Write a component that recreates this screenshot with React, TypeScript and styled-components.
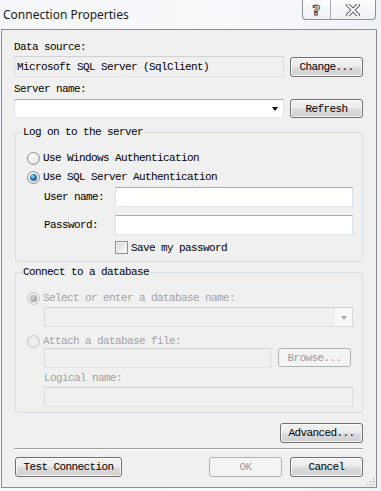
import React from "react";
import styled, { createGlobalStyle } from "styled-components";

const Global = createGlobalStyle`
  html, body { margin: 0; padding: 0; }
  body { width: 381px; height: 491px; overflow: hidden; background: #f3f6f9; }
`;

const mono = `"Liberation Mono", "DejaVu Sans Mono", monospace`;

const Window = styled.div`
  width: 381px;
  height: 491px;
  box-sizing: border-box;
  display: flex;
  flex-direction: column;
  background: linear-gradient(90deg, #f4f6f9 0%, #f8f9fb 60%, #eef2f7 100%);
  font-family: ${mono};
  font-size: 11px;
  letter-spacing: -0.6px;
  color: #000;
`;

const TitleBar = styled.div`
  height: 29px;
  flex: none;
  display: flex;
  justify-content: space-between;
  align-items: flex-start;
`;

const Title = styled.div`
  font-family: "Noto Sans", "Open Sans", sans-serif;
  font-size: 12px;
  letter-spacing: 0;
  color: #1b1b1b;
  padding: 7px 0 0 3px;
  line-height: 16px;
`;

const Caption = styled.div`
  margin-right: 5px;
  display: flex;
  height: 20px;
  width: 74px;
  box-sizing: border-box;
  border: 1px solid #8d9299;
  border-top: none;
  border-radius: 0 0 4px 4px;
  background: linear-gradient(#fbfcfd, #eef1f4);
`;

const CapButton = styled.div<{ $w: number; $divider?: boolean }>`
  width: ${(p) => p.$w}px;
  display: flex;
  align-items: center;
  justify-content: center;
  border-right: ${(p) => (p.$divider ? "1px solid #a9adb3" : "none")};
`;

const HelpGlyph = styled.span`
  font-family: "DejaVu Sans", sans-serif;
  font-weight: bold;
  font-size: 14px;
  letter-spacing: 0;
  color: #fff;
  -webkit-text-stroke: 1px #444;
  line-height: 14px;
`;

const Client = styled.div`
  margin: 0 4px 3px 1px;
  flex: 1;
  border: 1px solid #898c90;
  background: #f0f0f0;
  padding: 11px 13px 0 12px;
  display: flex;
  flex-direction: column;
  position: relative;
`;

const Label = styled.div<{ $top?: number; $left?: number; $disabled?: boolean }>`
  height: 12px;
  line-height: 12px;
  white-space: nowrap;
  margin-top: ${(p) => p.$top ?? 0}px;
  margin-left: ${(p) => p.$left ?? 0}px;
  color: ${(p) => (p.$disabled ? "#a2a2a2" : "#000")};
`;

const Row = styled.div<{ $top?: number; $left?: number; $gap?: number }>`
  display: flex;
  align-items: flex-start;
  margin-top: ${(p) => p.$top ?? 0}px;
  margin-left: ${(p) => p.$left ?? 0}px;
  gap: ${(p) => p.$gap ?? 0}px;
`;

const TextBox = styled.input<{ $w: number; $h?: number; $muted?: boolean }>`
  box-sizing: border-box;
  width: ${(p) => p.$w}px;
  height: ${(p) => p.$h ?? 20}px;
  margin: 0;
  padding: 0 0 0 2px;
  font: inherit;
  letter-spacing: inherit;
  color: #000;
  outline: none;
  border: 1px solid;
  border-color: ${(p) =>
    p.$muted ? "#d2d2d2 #dcdcdc #e2e2e2 #dcdcdc" : "#abadb3 #dbdfe6 #e3e9ef #e2e3ea"};
  background: ${(p) => (p.$muted ? "#f0f0f0" : "#fff")};
  &:disabled {
    background: #f0f0f0;
  }
`;

const Combo = styled.div<{ $w: number; $h?: number; $disabled?: boolean }>`
  box-sizing: border-box;
  width: ${(p) => p.$w}px;
  height: ${(p) => p.$h ?? 20}px;
  display: flex;
  justify-content: flex-end;
  align-items: stretch;
  border: 1px solid;
  border-color: ${(p) =>
    p.$disabled ? "#cfcfcf #d9d9d9 #dedede #d9d9d9" : "#abadb3 #dbdfe6 #e3e9ef #e2e3ea"};
  background: ${(p) => (p.$disabled ? "#f0f0f0" : "#fff")};
`;

const DropBtn = styled.div<{ $disabled?: boolean }>`
  width: 17px;
  display: flex;
  align-items: center;
  justify-content: center;
  background: ${(p) => (p.$disabled ? "#f7f7f7" : "transparent")};
  &::after {
    content: "";
    border-left: 3.5px solid transparent;
    border-right: 3.5px solid transparent;
    border-top: 4px solid ${(p) => (p.$disabled ? "#a6a6a6" : "#111")};
    margin-top: 1px;
  }
`;

const Button = styled.button<{ $w: number; $h?: number }>`
  box-sizing: border-box;
  width: ${(p) => p.$w}px;
  height: ${(p) => p.$h ?? 20}px;
  margin: 0;
  padding: 0;
  font: inherit;
  letter-spacing: inherit;
  line-height: 12px;
  color: #000;
  border: 1px solid #707070;
  border-radius: 3px;
  background: linear-gradient(#f2f2f2 0%, #ebebeb 49%, #dddddd 50%, #cfcfcf 100%);
  box-shadow: inset 0 0 0 1px rgba(255, 255, 255, 0.75);
  &:disabled {
    color: #9a9a9a;
    border-color: #adb2b5;
    background: #f4f4f4;
    box-shadow: none;
  }
`;

const Group = styled.fieldset<{ $top: number; $bottom: number }>`
  margin: ${(p) => p.$top}px 0 0 1px;
  padding: 0 6px ${(p) => p.$bottom}px 6px;
  border: 1px solid #d5dfe5;
  border-radius: 3px;
  min-width: 0;
  display: flex;
  flex-direction: column;
  align-items: flex-start;
`;

const Legend = styled.legend`
  padding: 0 1px;
  height: 12px;
  line-height: 12px;
`;

const RadioRow = styled.label<{ $top: number; $disabled?: boolean }>`
  display: flex;
  align-items: center;
  height: 14px;
  margin-top: ${(p) => p.$top}px;
  margin-left: 5px;
  gap: 3px;
  color: ${(p) => (p.$disabled ? "#a2a2a2" : "#000")};
  white-space: nowrap;
`;

const Radio = styled.span<{ $checked?: boolean; $disabled?: boolean }>`
  box-sizing: border-box;
  width: 13px;
  height: 13px;
  border-radius: 50%;
  border: 1px solid ${(p) => (p.$disabled ? "#c4c4c4" : "#8e8f8f")};
  background: ${(p) =>
    p.$disabled
      ? "radial-gradient(circle at 50% 50%, #f4f4f4, #e6e6e6)"
      : "radial-gradient(circle at 40% 35%, #ffffff 0%, #ececec 55%, #d2d2d2 100%)"};
  display: flex;
  align-items: center;
  justify-content: center;
  &::after {
    content: "";
    display: ${(p) => (p.$checked ? "block" : "none")};
    width: 7px;
    height: 7px;
    border-radius: 50%;
    background: ${(p) =>
      p.$disabled
        ? "radial-gradient(circle at 40% 35%, #d8d8d8, #9c9c9c 70%)"
        : "radial-gradient(circle at 40% 35%, #9ad8f7 0%, #2a78b8 45%, #0c3f72 100%)"};
  }
`;

const CheckRow = styled.label<{ $top: number; $left: number }>`
  display: flex;
  align-items: center;
  height: 13px;
  margin-top: ${(p) => p.$top}px;
  margin-left: ${(p) => p.$left}px;
  gap: 3px;
  white-space: nowrap;
`;

const Check = styled.span`
  box-sizing: border-box;
  width: 13px;
  height: 13px;
  border: 1px solid #8e8f8f;
  background: linear-gradient(135deg, #d6d6d6 0%, #eeeeee 60%, #ffffff 100%);
  box-shadow: inset 0 0 0 1px #f4f4f4;
`;

const FieldLabel = styled.div`
  width: 71px;
  height: 20px;
  line-height: 20px;
  white-space: nowrap;
`;

const Separator = styled.div`
  margin-top: 5px;
  height: 0;
  border-top: 1px solid #a0a0a0;
  border-bottom: 1px solid #ffffff;
`;

const RightAligned = styled.div`
  display: flex;
  justify-content: flex-end;
  margin-top: 10px;
`;

const BottomRow = styled.div`
  display: flex;
  align-items: flex-start;
  margin-top: 7px;
  padding-left: 1px;
`;

const Spacer = styled.div`
  flex: 1;
`;

const Grip = styled.svg`
  position: absolute;
  right: 1px;
  bottom: 1px;
`;

export default function App() {
  return (
    <>
      <Global />
      <Window>
        <TitleBar>
          <Title>Connection Properties</Title>
          <Caption>
            <CapButton $w={27} $divider>
              <HelpGlyph>?</HelpGlyph>
            </CapButton>
            <CapButton $w={45}>
              <svg width="14" height="12" viewBox="0 0 14 12">
                <path d="M2 1 L12 11 M12 1 L2 11" stroke="#5a5e63" strokeWidth="4" strokeLinecap="square" />
                <path d="M2 1 L12 11 M12 1 L2 11" stroke="#ffffff" strokeWidth="2" strokeLinecap="square" />
              </svg>
            </CapButton>
          </Caption>
        </TitleBar>
        <Client>
          <Label>Data source:</Label>
          <Row $top={3} $gap={6}>
            <TextBox $w={270} $h={21} $muted readOnly value="Microsoft SQL Server (SqlClient)" />
            <Button $w={73} style={{ marginTop: 1 }}>Change...</Button>
          </Row>
          <Label $top={6}>Server name:</Label>
          <Row $top={4} $gap={6}>
            <Combo $w={270} $h={19}>
              <DropBtn />
            </Combo>
            <Button $w={73} $h={19}>Refresh</Button>
          </Row>

          <Group $top={8} $bottom={7}>
            <Legend>Log on to the server</Legend>
            <RadioRow $top={13}>
              <Radio />
              Use Windows Authentication
            </RadioRow>
            <RadioRow $top={5}>
              <Radio $checked />
              Use SQL Server Authentication
            </RadioRow>
            <Row $top={3} $left={22}>
              <FieldLabel>User name:</FieldLabel>
              <TextBox $w={238} />
            </Row>
            <Row $top={8} $left={22}>
              <FieldLabel>Password:</FieldLabel>
              <TextBox $w={238} type="password" />
            </Row>
            <CheckRow $top={6} $left={93}>
              <Check />
              Save my password
            </CheckRow>
          </Group>

          <Group $top={4} $bottom={5}>
            <Legend>Connect to a database</Legend>
            <RadioRow $top={13} $disabled>
              <Radio $checked $disabled />
              Select or enter a database name:
            </RadioRow>
            <Row $top={2} $left={22}>
              <Combo $w={309} $disabled>
                <DropBtn $disabled />
              </Combo>
            </Row>
            <RadioRow $top={7} $disabled>
              <Radio $disabled />
              Attach a database file:
            </RadioRow>
            <Row $top={0} $left={22} $gap={7}>
              <TextBox $w={227} $muted disabled />
              <Button $w={73} $h={19} disabled>Browse...</Button>
            </Row>
            <Label $top={4} $left={22} $disabled>Logical name:</Label>
            <Row $top={3} $left={22}>
              <TextBox $w={309} $muted disabled />
            </Row>
          </Group>

          <RightAligned>
            <Button $w={83}>Advanced...</Button>
          </RightAligned>
          <Separator />
          <BottomRow>
            <Button $w={107}>Test Connection</Button>
            <Spacer />
            <Button $w={73} disabled>OK</Button>
            <Button $w={73} style={{ marginLeft: 8 }}>Cancel</Button>
          </BottomRow>
          <Grip width="8" height="8" viewBox="0 0 8 8">
            <rect x="6" y="0" width="1.5" height="1.5" fill="#b8b8b8" />
            <rect x="3" y="3" width="1.5" height="1.5" fill="#b8b8b8" />
            <rect x="6" y="3" width="1.5" height="1.5" fill="#b8b8b8" />
            <rect x="0" y="6" width="1.5" height="1.5" fill="#b8b8b8" />
            <rect x="3" y="6" width="1.5" height="1.5" fill="#b8b8b8" />
            <rect x="6" y="6" width="1.5" height="1.5" fill="#b8b8b8" />
          </Grip>
        </Client>
      </Window>
    </>
  );
}
